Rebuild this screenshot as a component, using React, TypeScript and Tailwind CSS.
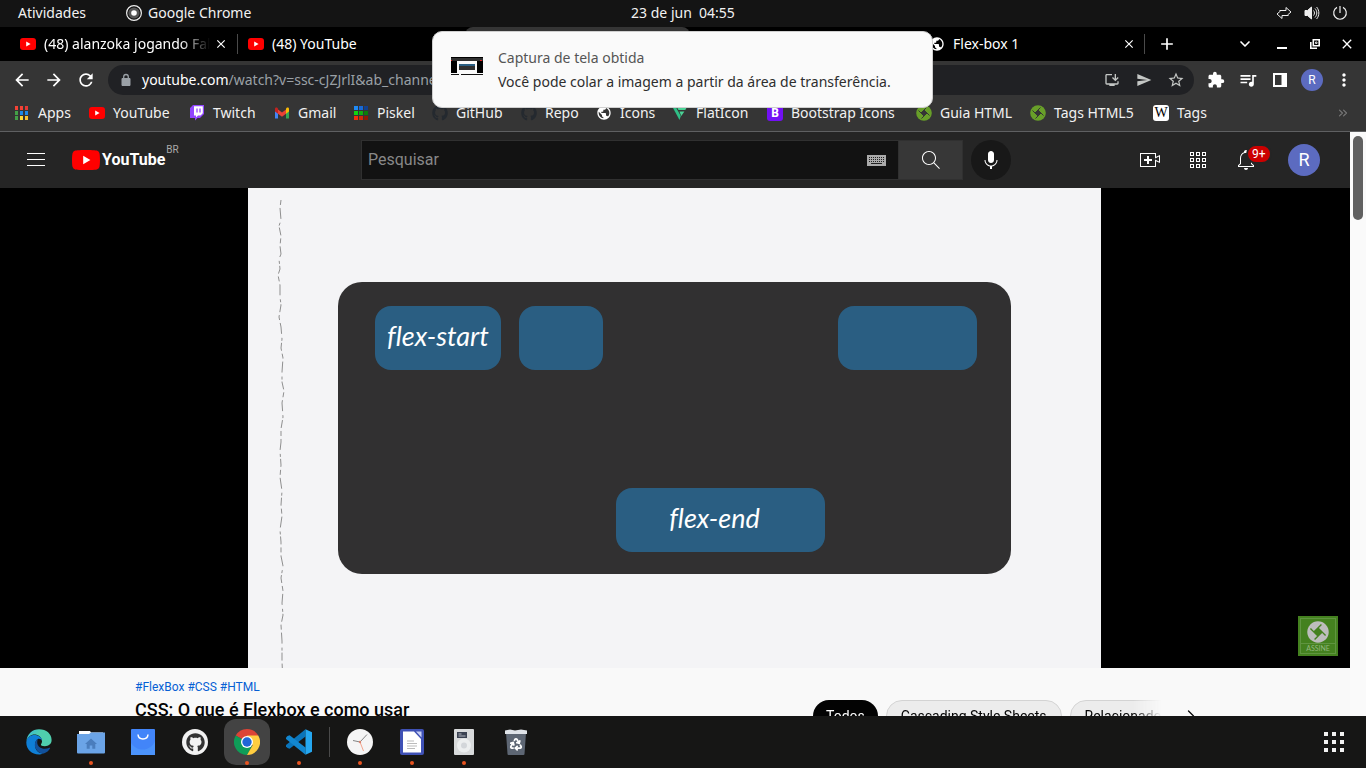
import React from 'react';
import { FaGithub, FaTwitch } from 'react-icons/fa';
import {
  MdArrowBack, MdArrowForward, MdRefresh, MdClose, MdAdd, MdPublic, MdOutlineInstallDesktop,
  MdSend, MdStarBorder, MdExtension, MdQueueMusic, MdMoreVert,
} from 'react-icons/md';
import { ChevronDown, ChevronRight, ChevronsRight, Recycle } from 'lucide-react';

const YouTubeMark = ({ className = 'h-4 w-4' }: { className?: string }) => (
  <svg viewBox="0 0 16 16" className={className} aria-hidden="true">
    <rect x="0" y="2" width="16" height="12" rx="3" fill="#f00" />
    <path d="M6.2 5.6v4.8L10.6 8z" fill="#fff" />
  </svg>
);

const AppsMark = () => {
  const colors = ['#f44336', '#f44336', '#e53935', '#43a047', '#1e88e5', '#1e88e5', '#43a047', '#fdd835', '#fbc02d'];
  return (
    <svg viewBox="0 0 16 16" className="h-4 w-4" aria-hidden="true">
      {colors.map((c, i) => (
        <rect key={i} x={1 + (i % 3) * 5} y={1 + Math.floor(i / 3) * 5} width="3" height="4" fill={c} />
      ))}
    </svg>
  );
};

const PiskelMark = () => {
  const colors = ['#1f8bf5', '#1769d6', '#12408c', '#13d313', '#10ad10', '#0b7d0b', '#f62d0c', '#cf2507', '#8f1903'];
  return (
    <svg viewBox="0 0 16 16" className="h-4 w-4" aria-hidden="true">
      {colors.map((c, i) => (
        <rect key={i} x={1 + (i % 3) * 5} y={1 + Math.floor(i / 3) * 5} width="4" height="4" fill={c} />
      ))}
    </svg>
  );
};

const GmailMark = () => (
  <svg viewBox="0 0 16 16" className="h-4 w-4" aria-hidden="true">
    <path d="M1 4v9.5h3V6.500z" fill="#4285f4" />
    <path d="M15 4v9.500h-3V6.500z" fill="#34a853" />
    <path d="M4 4.500v4.300l4 3 4-3V4.500l-4 3z" fill="#ea4335" />
    <path d="M1 4.200C1 2.500 2.600 2.300 3.500 3L4 3.400v5.400L1 6.500z" fill="#c5221f" />
    <path d="M15 4.200c0-1.700-1.600-1.900-2.500-1.200l-.5.4v5.400l3-2.300z" fill="#fbbc04" />
  </svg>
);

const Shutter = ({ fill, cut, className = 'h-4 w-4' }: { fill: string; cut: string; className?: string }) => (
  <svg viewBox="0 0 16 16" className={className} aria-hidden="true">
    <circle cx="8" cy="8" r="7.800" fill={fill} />
    <path d="M8 5l3 3-3 3-3-3z" fill={cut} />
    <path d="M8 5l5.500 5.500M11 8l-5.500 5.500M8 11L2.500 5.500M5 8l5.500-5.500" stroke={cut} strokeWidth="1" />
  </svg>
);

const FlatIconMark = () => (
  <svg viewBox="0 0 16 16" className="h-4 w-4" aria-hidden="true">
    <path d="M.5 2h3.300L8.800 11 7.500 15z" fill="#2fbf86" />
    <path d="M4.800 2H15l-1.700 3H6.500zM7.400 6.500h5L9.300 11z" fill="#4ad295" />
  </svg>
);

const LetterMark = ({ letter, className }: { letter: string; className: string }) => (
  <span className={`flex h-4 w-4 items-center justify-center rounded-[3px] ${className}`}>{letter}</span>
);

const bookmarks: { label: string; width: string; icon: React.ReactNode }[] = [
  { label: 'Apps', width: 'w-[75px]', icon: <AppsMark /> },
  { label: 'YouTube', width: 'w-[100px]', icon: <YouTubeMark /> },
  {
    label: 'Twitch',
    width: 'w-[85px]',
    icon: (
      <svg viewBox="0 0 16 16" className="h-4 w-4" aria-hidden="true">
        <path d="M4 0h11v9l-4 4H8.500L6 15.500V13H1V3z" fill="#9146ff" />
        <path d="M5 1.200h8.800v7L11.500 10.500H9l-2 2v-2H5z" fill="#fff" />
        <path d="M8 3.500v4M11 3.500v4" stroke="#9146ff" strokeWidth="1.300" />
      </svg>
    ),
  },
  { label: 'Gmail', width: 'w-[79px]', icon: <GmailMark /> },
  { label: 'Piskel', width: 'w-[79px]', icon: <PiskelMark /> },
  { label: 'GitHub', width: 'w-[89px]', icon: <FaGithub className="h-4 w-4 text-[#24292f]" /> },
  { label: 'Repo', width: 'w-[75px]', icon: <FaGithub className="h-4 w-4 text-[#24292f]" /> },
  { label: 'Icons', width: 'w-[76px]', icon: <MdPublic className="h-4 w-4 text-white" /> },
  { label: 'FlatIcon', width: 'w-[95px]', icon: <FlatIconMark /> },
  { label: 'Bootstrap Icons', width: 'w-[149px]', icon: <LetterMark letter="B" className="bg-[#7310f5] text-xs font-bold text-white" /> },
  { label: 'Guia HTML', width: 'w-[114px]', icon: <Shutter fill="#689f29" cut="#353535" /> },
  { label: 'Tags HTML5', width: 'w-[123px]', icon: <Shutter fill="#689f29" cut="#353535" /> },
  { label: 'Tags', width: 'w-[60px]', icon: <LetterMark letter="W" className="bg-white font-['Liberation_Serif',serif] text-sm text-black" /> },
];

const TopBar = () => (
  <header className="grid h-[27px] shrink-0 grid-cols-3 items-center bg-[#141414] px-[18px] pb-px text-[#f2f2f2]">
    <div className="flex items-center">
      <button className="w-[108px] text-left">Atividades</button>
      <button className="flex items-center gap-1.5">
        <svg viewBox="0 0 16 16" className="h-4 w-4" fill="none" aria-hidden="true">
          <circle cx="8" cy="8" r="7.400" stroke="#eee" strokeWidth="1.200" />
          <circle cx="8" cy="8" r="5.600" fill="#555" />
          <circle cx="8" cy="8" r="2.800" fill="#fff" />
        </svg>
        Google Chrome
      </button>
    </div>
    <button className="whitespace-pre text-center">23 de jun  04:55</button>
    <button aria-label="Sistema" className="flex items-center justify-end gap-3">
      <svg viewBox="0 0 16 16" className="h-4 w-4" fill="none" stroke="#eee" aria-hidden="true">
        <path d="M3.500 5.500h6.500v-3l5 4.500-3.500 3M12.500 10.500H6v3L1 9l3.500-3" />
      </svg>
      <svg viewBox="0 0 16 16" className="h-4 w-4" fill="none" stroke="#eee" aria-hidden="true">
        <path d="M1 5.500h2.500l4-3.500v12l-4-3.500H1z" fill="#eee" />
        <path d="M9.500 5.500c1.300 1.500 1.300 3.500 0 5M11 3.500c2.400 2.800 2.400 6.200 0 9M12.600 2c3 3.600 3 8.400 0 12" />
      </svg>
      <svg viewBox="0 0 16 16" className="h-4 w-4" fill="none" stroke="#eee" strokeWidth="1.200" aria-hidden="true">
        <path d="M5 2.400a6.300 6.300 0 1 0 6 0M8 1v7" />
      </svg>
    </button>
  </header>
);

const TabStrip = () => (
  <div className="flex h-[34px] shrink-0 items-center bg-black pl-[9px] text-white">
    <div className="flex w-[229px] shrink-0 items-center pl-[11px]">
      <YouTubeMark />
      <span className="ml-2 w-[166px] overflow-hidden whitespace-nowrap [mask-image:linear-gradient(to_right,black_82%,transparent)]">
        (48) alanzoka jogando Fall
      </span>
      <button aria-label="Fechar guia" className="ml-1"><MdClose className="h-3.5 w-3.5" /></button>
      <span className="ml-auto h-5 w-px bg-[#4a4a4a]" />
    </div>
    <div className="flex w-[227px] shrink-0 items-center gap-2 pl-[10px]">
      <YouTubeMark />
      (48) YouTube
    </div>
    <div className="h-full w-[225px] shrink-0 rounded-t-lg bg-[#353535]" />
    <div className="w-[228px] shrink" />
    <div className="flex w-[227px] shrink-0 items-center gap-2 pl-[11px]">
      <MdPublic className="h-4 w-4" />
      <span className="flex-1">Flex-box 1</span>
      <button aria-label="Fechar guia"><MdClose className="h-3.5 w-3.5" /></button>
      <span className="h-5 w-px bg-[#4a4a4a]" />
    </div>
    <button aria-label="Nova guia" className="ml-3"><MdAdd className="h-5 w-5" /></button>
    <div className="ml-auto flex items-center pr-0.5">
      <button aria-label="Pesquisar guias" className="flex w-[38px] justify-center"><ChevronDown className="h-4 w-4" strokeWidth={2.5} /></button>
      <button aria-label="Minimizar" className="flex w-[36px] justify-center">
        <svg viewBox="0 0 12 12" className="h-3 w-3" aria-hidden="true"><path d="M1 9h10v2H1z" fill="#fff" /></svg>
      </button>
      <button aria-label="Restaurar" className="flex w-[30px] justify-center">
        <svg viewBox="0 0 12 12" className="h-3 w-3" fill="none" stroke="#fff" strokeWidth="1.600" aria-hidden="true">
          <path d="M4.300 1.800h5.900v5.900H4.300zM1.800 4v6.200H8" />
          <path d="M6.500 4h1.500v1.500H6.500z" strokeWidth=".8" />
        </svg>
      </button>
      <button aria-label="Fechar" className="flex w-[34px] justify-center"><MdClose className="h-4 w-4" /></button>
    </div>
  </div>
);

const ToolButton = ({ label, children }: { label: string; children: React.ReactNode }) => (
  <button aria-label={label} className="flex h-8 w-8 shrink-0 items-center justify-center">{children}</button>
);

const Toolbar = () => (
  <div className="flex h-[38px] shrink-0 items-center bg-[#353535] px-1.5 text-white">
    <ToolButton label="Voltar"><MdArrowBack className="h-5 w-5" /></ToolButton>
    <ToolButton label="Avançar"><MdArrowForward className="h-5 w-5" /></ToolButton>
    <ToolButton label="Recarregar"><MdRefresh className="h-5 w-5" /></ToolButton>
    <div className="mx-1.5 flex h-[30px] flex-1 items-center rounded-full bg-[#202124] pr-0.5 pl-[11px] text-[#9aa0a6]">
      <svg viewBox="0 0 14 14" className="h-3.5 w-3.5" fill="none" aria-hidden="true">
        <path d="M3 5.500h8v7H3z" fill="#9aa0a6" stroke="#9aa0a6" strokeLinejoin="round" />
        <path d="M4.700 5.500V3.800a2.300 2.300 0 0 1 4.600 0v1.700" stroke="#9aa0a6" strokeWidth="1.300" />
      </svg>
      <span className="ml-[9px] flex-1 whitespace-nowrap">
        <span className="text-white">youtube.com</span>/watch?v=ssc-cJZJrlI&amp;ab_channel
      </span>
      <ToolButton label="Instalar"><MdOutlineInstallDesktop className="h-4 w-4 text-[#c4c7c5]" /></ToolButton>
      <ToolButton label="Enviar"><MdSend className="h-4 w-4 text-[#c4c7c5]" /></ToolButton>
      <ToolButton label="Favoritar"><MdStarBorder className="h-[18px] w-[18px] text-[#c4c7c5]" /></ToolButton>
    </div>
    <ToolButton label="Extensões"><MdExtension className="h-[18px] w-[18px]" /></ToolButton>
    <ToolButton label="Mídia"><MdQueueMusic className="h-5 w-5" /></ToolButton>
    <ToolButton label="Painel lateral">
      <svg viewBox="0 0 14 14" className="h-3.5 w-3.5" aria-hidden="true"><path d="M0 0h14v14H0zM2 2v10h6.500V2z" fill="#fff" fillRule="evenodd" /></svg>
    </ToolButton>
    <ToolButton label="Perfil">
      <span className="flex h-[22px] w-[22px] items-center justify-center rounded-full bg-[#5c6bc0] font-['Roboto',sans-serif] text-xs">R</span>
    </ToolButton>
    <ToolButton label="Mais"><MdMoreVert className="h-5 w-5" /></ToolButton>
  </div>
);

const BookmarkBar = () => (
  <nav className="flex h-[33px] shrink-0 items-center border-b border-[#5f6062] bg-[#353535] pb-1 pl-3.5 text-[#f1f1f1]">
    {bookmarks.map((b) => (
      <a key={b.label} href="#" className={`flex shrink-0 items-center gap-2 whitespace-nowrap ${b.width}`}>
        {b.icon}
        {b.label}
      </a>
    ))}
    <button aria-label="Mais favoritos" className="mr-4 ml-auto"><ChevronsRight className="h-3.5 w-3.5 text-[#777]" /></button>
  </nav>
);

const YtIcon = ({ d }: { d: string }) => (
  <svg viewBox="0 0 24 24" className="h-6 w-6" fill="#fff" aria-hidden="true"><path d={d} /></svg>
);

const YouTubeHeader = () => (
  <header className="flex h-14 shrink-0 items-center bg-[#252525] pl-[22px] font-['Roboto',sans-serif] text-white">
    <div className="flex flex-1 items-center pr-7 pl-0.5">
      <button aria-label="Guia"><YtIcon d="M21,6H3V5h18V6z M21,11H3v1h18V11z M21,17H3v1h18V17z" /></button>
      <a href="#" className="ml-6 flex items-center gap-0.5">
        <svg viewBox="0 0 28 20" className="h-5 w-7" aria-hidden="true">
          <path d="M27.400 3.100A3.500 3.500 0 0 0 24.900.6C22.700 0 14 0 14 0S5.300 0 3.100.6A3.500 3.500 0 0 0 .6 3.100C0 5.300 0 10 0 10s0 4.700.6 6.900a3.500 3.500 0 0 0 2.500 2.500C5.300 20 14 20 14 20s8.700 0 10.900-.6a3.500 3.500 0 0 0 2.500-2.500C28 14.700 28 10 28 10s0-4.700-.6-6.900z" fill="#f00" />
          <path d="M11.200 5.700v8.600l7.200-4.300z" fill="#fff" />
        </svg>
        <span className="font-bold text-base leading-5">YouTube</span>
      </a>
      <span className="mb-5 ml-px text-[10px] text-[#aaa]">BR</span>
    </div>
    <div className="flex w-[650px] items-center">
      <form className="flex h-10 flex-1">
        <div className="flex flex-1 items-center border border-[#303030] bg-[#121212] pr-3 pl-1.5">
          <input aria-label="Pesquisar" placeholder="Pesquisar" className="min-w-0 flex-1 bg-transparent text-base outline-none placeholder:text-[#888]" />
          <svg viewBox="0 0 19 11" className="h-[11px] w-[19px]" aria-hidden="true">
            <path d="M0 0h19v11H0z" fill="#aaa" />
            <path d="M2 2.500h15M2 4.500h15M2 6.500h15" stroke="#222" strokeDasharray="1 1" />
            <path d="M4 8.500h11" stroke="#222" />
          </svg>
        </div>
        <button type="button" aria-label="Buscar" className="flex w-16 items-center justify-center border border-l-0 border-[#303030] bg-[#373737]">
          <YtIcon d="M20.870,20.170l-5.590-5.590C16.350,13.350,17,11.750,17,10c0-3.870-3.130-7-7-7s-7,3.130-7,7s3.130,7,7,7c1.750,0,3.350-0.650,4.580-1.710l5.590,5.590L20.870,20.170z M10,16c-3.310,0-6-2.690-6-6s2.690-6,6-6s6,2.690,6,6S13.310,16,10,16z" />
        </button>
      </form>
      <button aria-label="Pesquisar por voz" className="ml-2 flex h-10 w-10 items-center justify-center rounded-full bg-[#181818]">
        <YtIcon d="M12 3C10.340 3 9 4.370 9 6.070V11.930C9 13.630 10.340 15 12 15C13.660 15 15 13.630 15 11.930V6.070C15 4.370 13.660 3 12 3ZM18.500 12H17.500C17.500 15.030 15.030 17.500 12 17.500C8.970 17.500 6.500 15.030 6.500 12H5.500C5.500 15.240 7.890 17.930 11 18.410V21H13V18.410C16.110 17.930 18.500 15.240 18.500 12Z" />
      </button>
    </div>
    <div className="flex flex-1 items-center justify-end gap-6 pr-[30px]">
      <button aria-label="Criar"><YtIcon d="M14,13h-3v3H9v-3H6v-2h3V8h2v3h3V13z M17,6H3v12h14v-6.390l4,1.830V8.560l-4,1.830V6 M18,5v3.830L22,7v8l-4-1.830V19H2V5H18L18,5z" /></button>
      <button aria-label="Apps">
        <svg viewBox="0 0 24 24" className="h-6 w-6" fill="none" stroke="#fff" aria-hidden="true">
          {[4.5, 10.5, 16.5].map((y) => [4.5, 10.5, 16.5].map((x) => <rect key={`${x}-${y}`} x={x} y={y} width="3" height="3" />))}
        </svg>
      </button>
      <button aria-label="Notificações" className="relative">
        <YtIcon d="M10,20h4c0,1.100-0.900,2-2,2S10,21.100,10,20z M20,17.350V19H4v-1.650l2-1.880v-5.150c0-2.920,1.560-5.220,4-5.980V3.960c0-1.420,1.490-2.500,2.990-1.760C13.640,2.520,14,3.230,14,3.960l0,0.390c2.440,0.750,4,3.060,4,5.980v5.150L20,17.350z M19,17.770l-2-1.880v-5.470c0-2.470-1.190-4.360-3.130-5.100c-1.260-0.530-2.640-0.500-3.840,0.030C8.150,6.110,7,7.990,7,10.420v5.470l-2,1.880V18h14V17.770z" />
        <span className="absolute -top-1 left-3 rounded-full border-2 border-[#252525] bg-[#c00] px-1 text-xs leading-4">9+</span>
      </button>
      <button aria-label="Conta" className="ml-1.5 flex h-8 w-8 items-center justify-center rounded-full bg-[#5c6bc0] text-lg">R</button>
    </div>
  </header>
);

const Video = () => (
  <section aria-label="Vídeo" className="relative flex h-[480px] shrink-0 justify-center bg-black pr-px">
    <div className="relative flex w-[853px] items-start justify-center bg-[#f4f4f6] pt-[94px]">
      <svg viewBox="0 0 8 480" className="absolute top-0 left-[29px] h-full w-2" fill="none" stroke="#8f8f8f" aria-hidden="true">
        <path
          d="M4 12l-1 8 1 12-2 6 2 10-1 10 1 8-2 5 1 10-2 6 2 10 0 12 1 8-2 12 2 10 1 12-1 9 2 10-1 14 0 10 2 9-2 12 1 14-2 12 0 13-1 9 1 14-1 12 2 14-1 14 1 11-2 14 1 12 0 14 2 10-2 12 2 13-1 12 1 12-2 10 1 16 0 20 1 24"
          strokeDasharray="5 3 11 4 3 2 8 3"
        />
      </svg>
      <div className="flex h-[292px] w-[673px] items-start gap-[13px] rounded-3xl bg-[#313031] pt-6 pr-[34px] pb-[22px] pl-[37px] font-['Lato',sans-serif] text-[27px] text-white italic [font-variant-ligatures:none]">
        <div className="mr-[5px] flex h-16 w-[126px] items-center justify-center rounded-2xl bg-[#2a5e82] pb-1">flex-start</div>
        <div className="h-16 w-[84px] rounded-2xl bg-[#2a5e82]" />
        <div className="flex h-16 flex-1 items-center justify-center self-end rounded-2xl bg-[#2a5e82] pr-3 pb-1">flex-end</div>
        <div className="h-16 w-[139px] rounded-2xl bg-[#2a5e82]" />
      </div>
    </div>
    <button className="absolute right-3 bottom-3 flex h-10 w-10 flex-col items-center justify-between bg-[#44811f] p-0.5 font-['Lato',sans-serif] text-[#93b77e]">
      <span className="flex w-full flex-1 flex-col items-center justify-between border border-[#5f9440] pt-0.5">
        <Shutter fill="#bdbdbd" cut="#44811f" className="h-[22px] w-[22px]" />
        <span className="w-full border-t border-[#5f9440] text-center text-[7px] leading-[9px]">ASSINE</span>
      </span>
    </button>
  </section>
);

const VideoInfo = () => (
  <div className="flex min-h-0 flex-1 items-start overflow-hidden bg-[#f9f9f9] pr-[135px] pl-[135px] font-['Roboto',sans-serif] text-[#030303]">
    <div className="flex-1 pt-2.5">
      <p className="text-xs leading-[18px] text-[#065fd4]">
        <a href="#">#FlexBox</a> <a href="#">#CSS</a> <a href="#">#HTML</a>
      </p>
      <h1 className="text-lg leading-7 font-medium">CSS: O que é Flexbox e como usar</h1>
    </div>
    <div className="flex w-[402px] items-center pt-8 text-sm">
      <div className="flex w-[352px] gap-2 overflow-hidden whitespace-nowrap [mask-image:linear-gradient(to_right,black_91%,transparent_99%)]">
        <button className="h-8 shrink-0 rounded-full bg-[#030303] px-[13px] text-white">Todos</button>
        <button className="h-8 shrink-0 rounded-full border border-[#d3d3d3] bg-[#ececec] px-3.5">Cascading Style Sheets</button>
        <button className="h-8 shrink-0 rounded-full border border-[#d3d3d3] bg-[#ececec] px-3.5">Relacionados</button>
      </div>
      <button aria-label="Próximo" className="ml-4"><ChevronRight className="h-5 w-5" strokeWidth={1.5} /></button>
    </div>
  </div>
);

const EdgeIcon = () => (
  <svg viewBox="0 0 26 26" className="h-[26px] w-[26px]" aria-hidden="true">
    <defs>
      <linearGradient id="edgeTop" x1="0" y1="0" x2="1" y2="0.500"><stop offset="0" stopColor="#35b8d9" /><stop offset="0.500" stopColor="#4fcfae" /></linearGradient>
    </defs>
    <path d="M0.500 12C1 5 6.500.3 13 .3 20.500.3 25.600 5 25.600 11c0 4-3 6.200-6.800 6.200-2.800 0-4.300-1-3.800-2 .7-1 1-1.700 1-2.900C16 8 12 5.500 8.500 5.500 4.800 5.500 2 8 .5 12z" fill="url(#edgeTop)" />
    <path d="M.3 13.500C.5 8.500 4.500 6 8.500 6c4 0 7.500 2.500 7.500 6-.5-1.500-1.700-2.200-3-2.200-2 0-4 2.700-4 6.200 0 5 4 8.500 8 8.500-1.500.8-2.800 1.100-4 1.100C5.600 25.600.3 20 .3 13.500z" fill="#0f7fd6" />
    <path d="M12 9.900c-3 1.500-4 6-2.400 9.400 1.800 3.800 5.500 5.700 8.200 5.200 3-.9 5-3 6.200-5 .4-.7 0-1-.6-.7-6 2.700-12.400-.5-12.200-5.800 0-1.200.3-2.200.8-3.100z" fill="#11519b" />
  </svg>
);

const FilesIcon = () => (
  <svg viewBox="0 0 28 26" className="h-[26px] w-7" aria-hidden="true">
    <path d="M2 2h11l1 1.500h12V12H2z" fill="#fff" />
    <path d="M0 5h12l2-1.500h14V23.500a1 1 0 0 1-1 1H1a1 1 0 0 1-1-1z" fill="#6ba4e7" />
    <path d="M14 9.500l-6 5.500h1.700v4.800h3V16.500h2.600v3.300h3V15H20z" fill="#4a7dbd" />
  </svg>
);

const StoreIcon = () => (
  <svg viewBox="0 0 24 26" className="h-[26px] w-6" aria-hidden="true">
    <rect width="24" height="26" rx="1" fill="#4285f9" />
    <path d="M0 14c7 10 20 8 24-2v14H0z" fill="#4b93fb" />
    <path d="M7 5.500c.5 6 9.500 6 10 0" stroke="#fff" strokeWidth="1.500" fill="none" />
  </svg>
);

const GitHubIcon = () => (
  <span className="flex h-[26px] w-[26px] items-center justify-center rounded-full bg-[#f2f2f2]"><FaGithub className="h-[19px] w-[19px] text-[#333]" /></span>
);

const ChromeIcon = () => (
  <svg viewBox="0 0 26 26" className="h-[26px] w-[26px]" aria-hidden="true">
    <path d="M13 13L1.740 6.500A13 13 0 0 1 24.260 6.500z" fill="#db4437" />
    <path d="M13 13L1.740 6.500A13 13 0 0 0 13 26l5-9z" fill="#0f9d58" />
    <path d="M13 6.500h11.260A13 13 0 0 1 13 26l5.600-9.700z" fill="#ffcd40" />
    <circle cx="13" cy="13" r="6" fill="#fff" />
    <circle cx="13" cy="13" r="4.700" fill="#1f66d6" />
  </svg>
);

const CodeIcon = () => (
  <svg viewBox="0 0 26 26" className="h-[26px] w-[26px]" aria-hidden="true">
    <path d="M19.500.3v7.200L3.600 19.800 1.500 18.900 0 17.400v-1.300z" fill="#0a74ba" />
    <path d="M19.500 25.700v-7.200L3.600 6.200 1.500 7.100 0 8.600v1.300z" fill="#1287d0" />
    <path d="M19.500.3L26 3.200v19.600l-6.500 2.900z" fill="#25a7f0" />
  </svg>
);

const ClockIcon = () => (
  <svg viewBox="0 0 26 26" className="h-[26px] w-[26px]" fill="none" aria-hidden="true">
    <circle cx="13" cy="13" r="13" fill="#f5f5f5" />
    <path d="M13 13L6 11.500M13 13l7-7.500" stroke="#777" strokeWidth=".9" />
    <path d="M13 13l3.500 9" stroke="#f4a58e" />
    <circle cx="13" cy="13" r="1.200" fill="#d98570" />
  </svg>
);

const WriterIcon = () => (
  <svg viewBox="0 0 24 26" className="h-[26px] w-6" aria-hidden="true">
    <rect width="24" height="26" rx="2" fill="#3f51b5" />
    <path d="M3 2.500h11l7 7.500v13.500H3z" fill="#fff" />
    <path d="M16 2.500h5.500v6z" fill="#c8d0f5" />
    <path d="M7 12h7M7 14.500h10M7 17h10M7 19.500h8" stroke="#bbb" />
  </svg>
);

const PlayerIcon = () => (
  <svg viewBox="0 0 20 26" className="h-[26px] w-5" aria-hidden="true">
    <rect width="20" height="26" rx="1" fill="#d8dadb" />
    <rect x="3" y="3" width="10" height="6" fill="#3b4252" />
    <path d="M4.500 5h3M4.500 7h7" stroke="#cfd3da" strokeWidth=".8" />
    <circle cx="10" cy="16.500" r="7" fill="#eceeef" />
    <circle cx="10" cy="16.500" r="3" fill="#d3d6da" />
  </svg>
);

const TrashIcon = () => (
  <span className="relative">
    <svg viewBox="0 0 22 26" className="h-[26px] w-[22px]" aria-hidden="true">
      <path d="M1 4h20l-1.500 21a1 1 0 0 1-1 1h-15a1 1 0 0 1-1-1z" fill="#5d6673" />
      <path d="M0 1.500L5 .5l5 1 6-1 6 1V5H0z" fill="#dfe3e8" />
    </svg>
    <Recycle className="absolute top-2 left-1 h-3.5 w-3.5 text-white" strokeWidth={3} />
  </span>
);

type DockApp = { name: string; icon: React.ReactNode; running?: boolean; active?: boolean };

const pinned: DockApp[] = [
  { name: 'Microsoft Edge', icon: <EdgeIcon /> },
  { name: 'Arquivos', icon: <FilesIcon />, running: true },
  { name: 'Software', icon: <StoreIcon /> },
  { name: 'GitHub Desktop', icon: <GitHubIcon /> },
  { name: 'Google Chrome', icon: <ChromeIcon />, running: true, active: true },
  { name: 'Visual Studio Code', icon: <CodeIcon />, running: true },
];

const extra: DockApp[] = [
  { name: 'Relógio', icon: <ClockIcon />, running: true },
  { name: 'Writer', icon: <WriterIcon />, running: true },
  { name: 'Rhythmbox', icon: <PlayerIcon />, running: true },
  { name: 'Lixeira', icon: <TrashIcon /> },
];

const DockItem = ({ app }: { app: DockApp }) => (
  <button
    aria-label={app.name}
    className={`relative mx-[3px] flex h-[46px] w-[46px] items-center justify-center rounded-xl ${app.active ? 'bg-[#434343]' : ''}`}
  >
    {app.icon}
    {app.running && <span className="absolute bottom-0 left-[21px] h-1 w-1 rounded-full bg-[#e95420]" />}
  </button>
);

const Dock = () => (
  <nav aria-label="Dock" className="flex h-[52px] shrink-0 items-center bg-[#161615] pr-[22px] pl-[13px]">
    {pinned.map((a) => <DockItem key={a.name} app={a} />)}
    <span className="mx-1 h-[30px] w-px bg-[#4a4a4a]" />
    {extra.map((a) => <DockItem key={a.name} app={a} />)}
    <button aria-label="Mostrar aplicativos" className="ml-auto grid grid-cols-3 gap-1">
      {Array.from({ length: 9 }, (_, i) => <span key={i} className="h-1 w-1 bg-[#f2f2f2]" />)}
    </button>
  </nav>
);

const Notification = () => (
  <div className="pointer-events-none absolute inset-x-0 top-[31px] z-10 flex justify-center pr-px">
    <div role="status" className="flex h-[77px] w-[501px] items-start rounded-[10px] border border-[#cfcfcf] bg-[#fafafa] pt-3.5 pl-[18px]">
      <svg viewBox="0 0 32 18" className="mt-[11px] h-[18px] w-8 shrink-0" aria-hidden="true">
        <path d="M0 0h32v18H0z" fill="#fafafa" />
        <path d="M0 0h32v16H0z" fill="#000" />
        <path d="M0 1h32v3H0z" fill="#303030" />
        <path d="M0 3h1v1H0zM29 3h2v1h-2z" fill="#d22" />
        <path d="M6 4h20v12H6z" fill="#fafafa" />
        <path d="M8 7h16v6H8z" fill="#303030" />
        <path d="M8 7h16v2H8z" fill="#2a5e82" />
        <path d="M0 17h8v1H0zM10 17h22v1H10z" fill="#111" />
      </svg>
      <div className="ml-[15px] leading-6 whitespace-nowrap">
        <p className="text-[#555]">Captura de tela obtida</p>
        <p className="text-[#2e2e2e]">Você pode colar a imagem a partir da área de transferência.</p>
      </div>
    </div>
  </div>
);

export default function App() {
  return (
    <div className="relative flex h-screen flex-col overflow-hidden bg-black font-['Noto_Sans',sans-serif] text-sm">
      <TopBar />
      <TabStrip />
      <Toolbar />
      <BookmarkBar />
      <main className="flex min-h-0 flex-1">
        <div className="flex min-w-0 flex-1 flex-col">
          <YouTubeHeader />
          <Video />
          <VideoInfo />
        </div>
        <div className="w-4 bg-[#fafafa] px-[3px] py-1">
          <div className="h-[84px] rounded-full bg-[#606060]" />
        </div>
      </main>
      <Dock />
      <Notification />
    </div>
  );
}
